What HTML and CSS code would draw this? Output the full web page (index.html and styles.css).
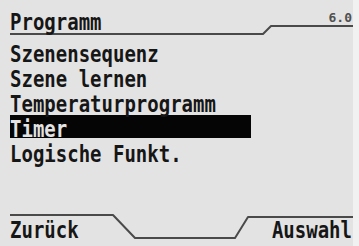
FILE: index.html
```html
<!DOCTYPE html>
<html lang="de">
<head>
<meta charset="utf-8">
<title>Programm</title>
<link rel="stylesheet" href="styles.css">
</head>
<body>
<div class="screen">
  <header class="head">
    <div class="title"><span class="t">Programm</span></div>
    <svg class="slant" width="8" height="36" viewBox="0 0 8 36"><polyline points="0,34 8,26"/></svg>
    <div class="ver"><span>6.0</span></div>
  </header>
  <ul class="menu">
    <li class="item"><span class="t">Szenensequenz</span></li>
    <li class="item"><span class="t">Szene lernen</span></li>
    <li class="item"><span class="t">Temperaturprogramm</span></li>
    <li class="item sel"><span class="t">Timer</span></li>
    <li class="item"><span class="t">Logische Funkt.</span></li>
  </ul>
  <footer class="foot">
    <div class="soft-left"><span class="t">Zurück</span></div>
    <svg class="slant" width="22" height="32" viewBox="0 0 22 32"><polyline points="0,1 22,24"/></svg>
    <div class="mid"></div>
    <svg class="slant" width="13" height="32" viewBox="0 0 13 32"><polyline points="0,24 13,3"/></svg>
    <div class="soft-right"><span class="t">Auswahl</span></div>
  </footer>
</div>
</body>
</html>
```

FILE: styles.css
```css
html, body {
  margin: 0;
  padding: 0;
}
body {
  width: 359px;
  height: 246px;
  overflow: hidden;
  background: #f1f1f1;
}
.screen {
  width: 353px;
  height: 246px;
  box-sizing: border-box;
  padding-left: 10px;
  background: #e3e3e3;
  display: flex;
  flex-direction: column;
  font-family: "DejaVu Sans Mono", "Liberation Mono", monospace;
  font-weight: 700;
  font-size: 19px;
  line-height: 23px;
  color: #161616;
}
.t {
  display: inline-block;
  height: 23px;
  white-space: pre;
  transform: scaleY(1.227);
  transform-origin: 0 1px;
}
.slant {
  flex: none;
  overflow: visible;
}
.slant polyline {
  fill: none;
  stroke: #4a4a4a;
  stroke-width: 2;
  stroke-linecap: round;
}
.head {
  display: flex;
  align-items: flex-start;
  height: 36px;
  flex: none;
}
.title {
  width: 253px;
  flex: none;
  display: flex;
  padding-top: 8px;
  padding-bottom: 2px;
  border-bottom: 2px solid #4a4a4a;
}
.ver {
  flex: 1;
  height: 25px;
  border-bottom: 2px solid #4a4a4a;
  display: flex;
  justify-content: flex-end;
  align-items: flex-end;
  padding-right: 1px;
  padding-bottom: 1px;
  box-sizing: border-box;
  height: 27px;
  font-size: 13px;
  line-height: 13px;
  color: #505050;
}
.menu {
  list-style: none;
  margin: 0;
  padding: 4px 0 0;
  flex: none;
}
.item {
  width: 241px;
  height: 23px;
  margin-bottom: 2px;
  display: flex;
}
.item.sel {
  background: #050505;
  color: #e3e3e3;
}
.foot {
  margin-top: auto;
  height: 32px;
  flex: none;
  display: flex;
  align-items: flex-start;
}
.soft-left {
  width: 103px;
  flex: none;
  height: 23px;
  display: flex;
  border-top: 2px solid #4a4a4a;
}
.mid {
  width: 100px;
  flex: none;
  height: 23px;
  border-bottom: 2px solid #4a4a4a;
}
.soft-right {
  flex: 1;
  margin-top: 2px;
  height: 23px;
  display: flex;
  justify-content: flex-end;
  border-top: 2px solid #4a4a4a;
}
.soft-right .t {
  margin-top: -2px;
  margin-right: 1px;
}
```
